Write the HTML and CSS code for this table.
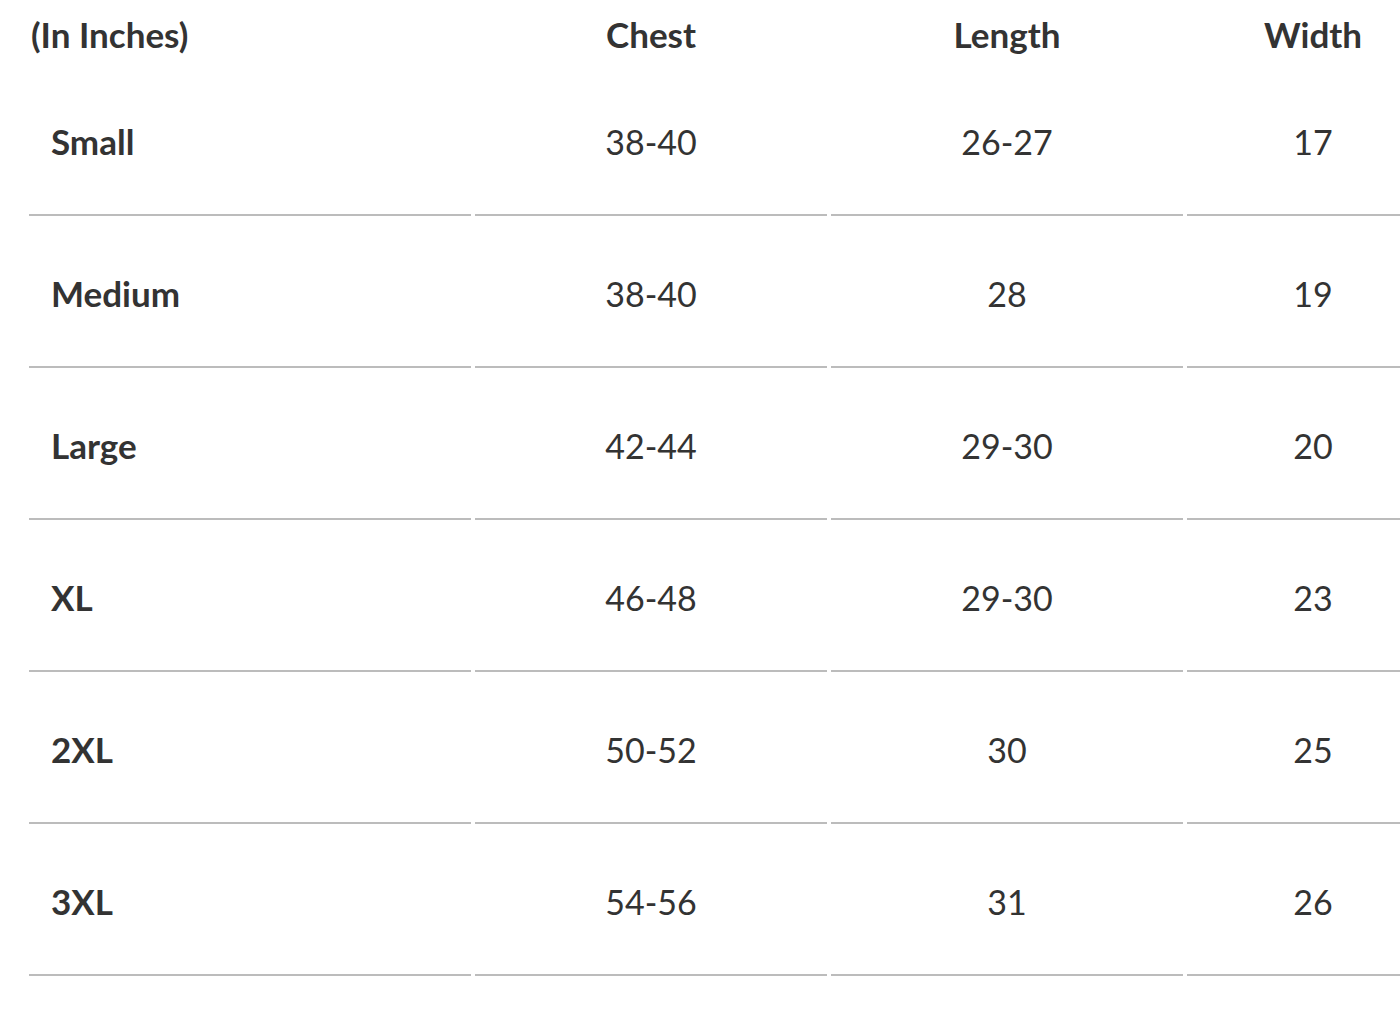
FILE: index.html
```html
<!DOCTYPE html>
<html lang="en">
<head>
<meta charset="utf-8">
<title>Size Chart</title>
<link rel="stylesheet" href="styles.css">
</head>
<body>
<div class="wrap">
<table class="size-table">
  <colgroup>
    <col class="c1"><col class="c2"><col class="c3"><col class="c4">
  </colgroup>
  <thead>
    <tr><th class="first">(In Inches)</th><th>Chest</th><th>Length</th><th>Width</th></tr>
  </thead>
  <tbody>
    <tr><td class="label">Small</td><td>38-40</td><td>26-27</td><td>17</td></tr>
    <tr><td class="label">Medium</td><td>38-40</td><td>28</td><td>19</td></tr>
    <tr><td class="label">Large</td><td>42-44</td><td>29-30</td><td>20</td></tr>
    <tr><td class="label">XL</td><td>46-48</td><td>29-30</td><td>23</td></tr>
    <tr><td class="label">2XL</td><td>50-52</td><td>30</td><td>25</td></tr>
    <tr><td class="label">3XL</td><td>54-56</td><td>31</td><td>26</td></tr>
  </tbody>
</table>
</div>
</body>
</html>
```
FILE: styles.css
```css
html, body {
  margin: 0;
  padding: 0;
  background: #fff;
  overflow: hidden;
}
.wrap {
  width: 1400px;
  overflow: hidden;
}
.size-table {
  margin-left: 25px;
  border-collapse: separate;
  border-spacing: 4px 0;
  table-layout: fixed;
  width: 1414px;
  font-family: "Lato", "Open Sans", sans-serif;
  font-size: 34px;
  color: #333;
}
.c1 { width: 442px; }
.c2 { width: 352px; }
.c3 { width: 352px; }
.c4 { width: 252px; }
th {
  font-weight: 700;
  font-size: 35px;
  height: 64px;
  padding: 0;
  padding-top: 4px;
  box-sizing: border-box;
  text-align: center;
  vertical-align: middle;
}
th.first {
  text-align: left;
  padding-left: 2px;
}
td {
  height: 152px;
  padding: 4px 0 0;
  text-align: center;
  vertical-align: middle;
  border-bottom: 2px solid #bcbcbc;
  box-sizing: border-box;
  font-weight: 400;
}
td.label {
  text-align: left;
  padding-left: 22px;
  font-weight: 700;
  font-size: 35px;
}
```
